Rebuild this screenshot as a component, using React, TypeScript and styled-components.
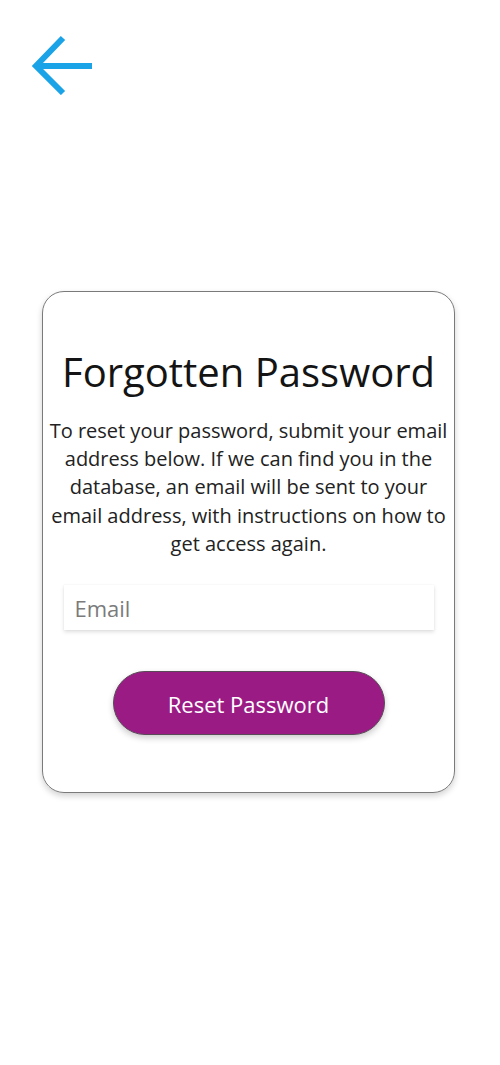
import React from "react";
import styled, { createGlobalStyle } from "styled-components";

const Global = createGlobalStyle`
  html, body { margin: 0; padding: 0; background: #ffffff; }
  body { font-family: "Open Sans", "Noto Sans", sans-serif; color: #1a1a1a; }
`;

const Page = styled.div`
  width: 500px;
  min-height: 1065px;
  display: flex;
  flex-direction: column;
  background: #fff;
`;

const TopBar = styled.div`
  height: 100px;
  padding: 35px 0 0 32px;
  box-sizing: border-box;
`;

const BackButton = styled.button`
  width: 62px;
  height: 60px;
  padding: 0;
  border: none;
  background: transparent;
  cursor: pointer;
  display: block;
`;

const Card = styled.div`
  margin: 191px 0 0 42px;
  width: 413px;
  height: 502px;
  box-sizing: border-box;
  border: 1px solid #7a7a7a;
  border-radius: 22px;
  box-shadow: 0 3px 6px rgba(0, 0, 0, 0.18);
  display: flex;
  flex-direction: column;
  align-items: center;
  padding: 55px 4px 0;
`;

const Title = styled.h1`
  margin: 0;
  font-family: "Open Sans", "Noto Sans", sans-serif;
  font-weight: 400;
  font-size: 40px;
  line-height: 50px;
  color: #141414;
  white-space: nowrap;
`;

const Body = styled.p`
  margin: 20px 0 0;
  font-size: 20px;
  line-height: 28.2px;
  text-align: center;
  color: #222;
`;

const EmailInput = styled.input`
  margin-top: 27px;
  width: 370px;
  height: 45px;
  box-sizing: border-box;
  border: none;
  outline: none;
  padding: 0 0 0 11px;
  font-family: "Open Sans", "Noto Sans", sans-serif;
  font-size: 22px;
  color: #333;
  background: #fff;
  box-shadow: 0 2px 4px rgba(0, 0, 0, 0.13), 0 0 1px rgba(0, 0, 0, 0.08);
  &::placeholder { color: #7b7b7b; }
`;

const ResetButton = styled.button`
  margin-top: 41px;
  width: 272px;
  height: 64px;
  border-radius: 32px;
  border: 1px solid #5a4a58;
  background: #9b1b85;
  color: #ffffff;
  font-family: "Open Sans", "Noto Sans", sans-serif;
  font-size: 22px;
  padding-top: 3px;
  cursor: pointer;
  box-shadow: 0 3px 6px rgba(0, 0, 0, 0.2);
`;

const BackArrow = () => (
  <svg width="62" height="60" viewBox="0 0 62 60" fill="none">
    <path
      d="M31 3 L4 31 L31 58 M4 31 L60 31"
      stroke="#1aa3e6"
      strokeWidth="6"
      strokeLinecap="butt"
      strokeLinejoin="miter"
    />
  </svg>
);

export default function App() {
  return (
    <Page>
      <Global />
      <TopBar>
        <BackButton aria-label="Back">
          <BackArrow />
        </BackButton>
      </TopBar>
      <Card>
        <Title>Forgotten Password</Title>
        <Body>
          To reset your password, submit your email address below. If we can find you in the database, an
          email will be sent to your email address, with instructions on how to get access again.
        </Body>
        <EmailInput placeholder="Email" />
        <ResetButton>Reset Password</ResetButton>
      </Card>
    </Page>
  );
}
